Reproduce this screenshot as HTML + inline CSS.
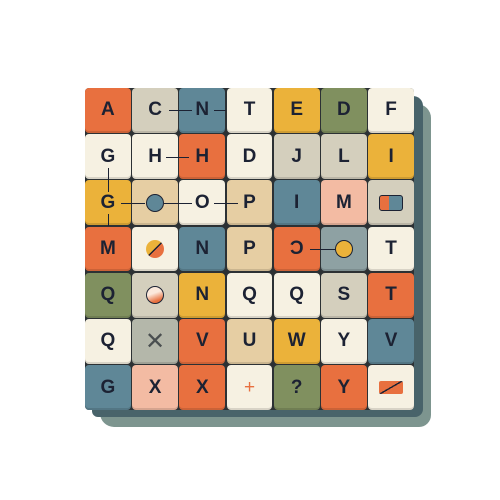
<!DOCTYPE html>
<html><head><meta charset="utf-8"><style>
body{margin:0;width:500px;height:500px;background:#fff;position:relative;overflow:hidden;font-family:"Liberation Sans",sans-serif}
.sh2{position:absolute;left:100px;top:104px;width:331px;height:323px;background:#7d958f;border-radius:0 14px 12px 14px}
.sh1{position:absolute;left:92px;top:96px;width:331px;height:321px;background:#48636a;border-radius:0 10px 8px 6px}
.g{position:absolute;left:85px;top:88px;width:329px;height:322px;background:#2c3134;border-radius:4px;display:grid;grid-template-columns:repeat(7,1fr);grid-template-rows:repeat(7,1fr);gap:1.4px;padding:0}
.t{border-radius:4px;display:flex;align-items:center;justify-content:center;font-weight:bold;font-size:19px;color:#1c2233;position:relative;box-shadow:inset 0 -2px 0 rgba(0,0,0,.12)}
.o{background:#e8703f}.b{background:#d4cfbd}.u{background:#5f8797}.c{background:#f6f1e2}.y{background:#ebb23a}.v{background:#80905f}.n{background:#e6cea3}.p{background:#f3bba3}.gr{background:#b4b7aa}.ug{background:#8ea1a3}
.circ{width:18px;height:18px;border-radius:50%;border:1.5px solid #1c2233;box-sizing:border-box}
.ln{position:absolute;background:#1c2233;z-index:2}
</style></head><body>
<div class="sh2"></div><div class="sh1"></div>
<div class="g">
<div class="t o">A</div><div class="t b">C</div><div class="t u">N</div><div class="t c">T</div><div class="t y">E</div><div class="t v">D</div><div class="t c">F</div>
<div class="t c">G</div><div class="t c">H</div><div class="t o">H</div><div class="t c">D</div><div class="t b">J</div><div class="t b">L</div><div class="t y">I</div>
<div class="t y">G</div><div class="t n"><div class="circ" style="background:#5f8797"></div></div><div class="t c">O</div><div class="t n">P</div><div class="t u">I</div><div class="t p">M</div><div class="t b"><div style="width:22px;height:14px;border-radius:3px;background:linear-gradient(90deg,#e8703f 0 40%,#5f8797 40%);border:1.5px solid #1c2233"></div></div>
<div class="t o">M</div><div class="t c"><div class="circ" style="border:none;background:linear-gradient(135deg,#ebb23a 0 48%,#1c2233 48% 54%,#e8703f 54%)"></div></div><div class="t u">N</div><div class="t n">P</div><div class="t o">Ɔ</div><div class="t ug"><div class="circ" style="background:#ebb23a"></div></div><div class="t c">T</div>
<div class="t v">Q</div><div class="t b"><div class="circ" style="background:linear-gradient(160deg,#fbe9dc 0 40%,#e8703f 80%)"></div></div><div class="t y">N</div><div class="t c">Q</div><div class="t c">Q</div><div class="t b">S</div><div class="t o">T</div>
<div class="t c">Q</div><div class="t gr" style="color:#4a4f50;font-weight:normal;font-size:24px">✕</div><div class="t o">V</div><div class="t n">U</div><div class="t y">W</div><div class="t c">Y</div><div class="t u">V</div>
<div class="t u">G</div><div class="t p">X</div><div class="t o">X</div><div class="t c" style="color:#e8703f;font-weight:normal">+</div><div class="t v">?</div><div class="t o">Y</div><div class="t c"><div style="width:24px;height:13px;border-radius:2px;background:linear-gradient(150deg,#e8703f 0 47%,#1c2233 47% 53%,#e8703f 53%)"></div></div>
</div>
<div class="ln" style="left:166px;top:157px;width:23px;height:1px"></div>
<div class="ln" style="left:121px;top:203px;width:24px;height:1px"></div>
<div class="ln" style="left:164px;top:203px;width:28px;height:1px"></div>
<div class="ln" style="left:214px;top:203px;width:24px;height:1px"></div>
<div class="ln" style="left:108px;top:168px;width:1px;height:24px"></div>
<div class="ln" style="left:108px;top:214px;width:1px;height:12px"></div>
<div class="ln" style="left:310px;top:249px;width:25px;height:1px"></div>
<div class="ln" style="left:169px;top:110px;width:23px;height:1px"></div>
<div class="ln" style="left:214px;top:110px;width:12px;height:1px"></div>
</body></html>
